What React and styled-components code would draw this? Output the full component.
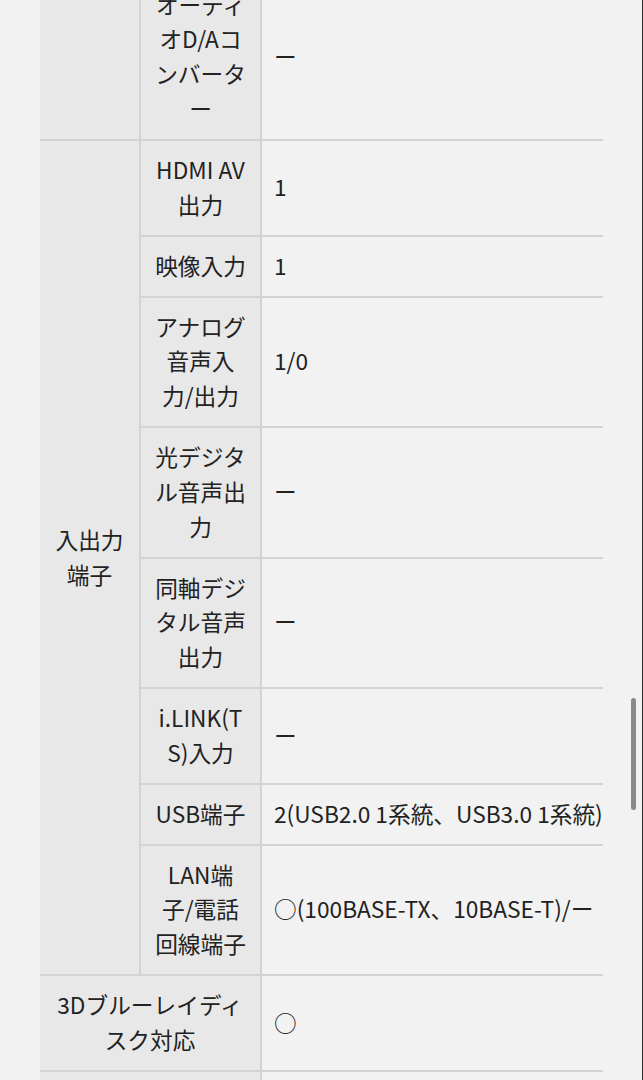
import React from "react";
import styled, { createGlobalStyle } from "styled-components";

const Global = createGlobalStyle`
  html, body {
    margin: 0;
    padding: 0;
    background: #f2f2f2;
    overflow: hidden;
  }
  body {
    font-family: "Noto Sans CJK JP", "Noto Sans", sans-serif;
    color: #222;
  }
`;

const Page = styled.div`
  padding: 0 0 0 40px;
  margin-top: -24.4px;
`;

const SpecTable = styled.table`
  width: 563px;
  table-layout: fixed;
  border-collapse: separate;
  border-spacing: 0;
  font-size: 22.7px;
  line-height: 34.85px;
`;

const HeadCell = styled.th`
  background: #e8e8e8;
  font-weight: 400;
  text-align: center;
  vertical-align: middle;
  padding: 12px 13px;
  border-right: 2px solid #d3d3d3;
  border-bottom: 2px solid #d3d3d3;
  overflow-wrap: anywhere;
`;

const ValueCell = styled.td`
  background: #f2f2f2;
  text-align: left;
  vertical-align: middle;
  padding: 12px 0 12px 12px;
  border-bottom: 2px solid #d3d3d3;
  white-space: ${(p) => (p.$nowrap ? "nowrap" : "normal")};
`;

const ScrollTrack = styled.div`
  position: fixed;
  top: 0;
  right: 0;
  width: 1px;
  height: 100%;
  background: #2a2a2a;
`;

const ScrollThumb = styled.div`
  position: fixed;
  top: 698px;
  right: 7px;
  width: 5px;
  height: 112px;
  border-radius: 3px;
  background: #8a8a8a;
`;

const groups = [
  {
    label: "",
    rows: [{ name: "オーディオD/Aコンバーター", value: "ー" }],
  },
  {
    label: "入出力端子",
    rows: [
      { name: "HDMI AV出力", value: "1" },
      { name: "映像入力", value: "1" },
      { name: "アナログ音声入力/出力", value: "1/0" },
      { name: "光デジタル音声出力", value: "ー" },
      { name: "同軸デジタル音声出力", value: "ー" },
      { name: "i.LINK(TS)入力", value: "ー" },
      { name: "USB端子", value: "2(USB2.0 1系統、USB3.0 1系統)" },
      { name: "LAN端子/電話回線端子", value: "○(100BASE-TX、10BASE-T)/ー" },
    ],
  },
];

const singles = [
  { name: "3Dブルーレイディスク対応", value: "○" },
  { name: "4K Ultra HD ブルーレイ対応", value: "ー" },
];

export default function App() {
  return (
    <>
      <Global />
      <Page>
        <SpecTable>
          <colgroup>
            <col style={{ width: 101 }} />
            <col style={{ width: 121 }} />
            <col style={{ width: 341 }} />
          </colgroup>
          <tbody>
            {groups.map((g, gi) =>
              g.rows.map((r, ri) => (
                <tr key={`${gi}-${ri}`}>
                  {ri === 0 && <HeadCell rowSpan={g.rows.length}>{g.label}</HeadCell>}
                  <HeadCell>{r.name}</HeadCell>
                  <ValueCell $nowrap={r.value.length > 20}>{r.value}</ValueCell>
                </tr>
              ))
            )}
            {singles.map((s) => (
              <tr key={s.name}>
                <HeadCell colSpan={2}>{s.name}</HeadCell>
                <ValueCell>{s.value}</ValueCell>
              </tr>
            ))}
          </tbody>
        </SpecTable>
      </Page>
      <ScrollTrack />
      <ScrollThumb />
    </>
  );
}
